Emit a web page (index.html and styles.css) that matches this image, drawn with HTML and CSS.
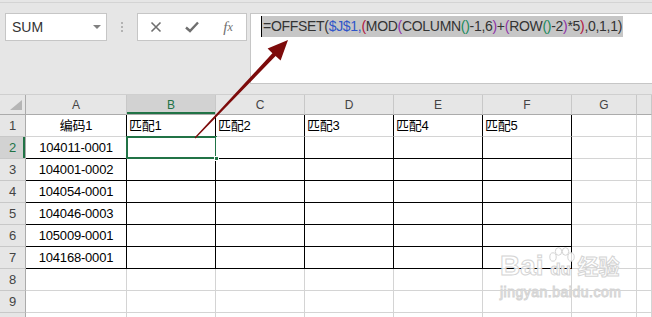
FILE: index.html
```html
<!DOCTYPE html>
<html lang="zh-CN">
  <head>
    <meta charset="UTF-8" />
    <title>Excel - OFFSET</title>
    <link rel="stylesheet" href="styles.css">
  </head>
  <body>
    <div class="app">

      <!-- Formula bar -->
      <div class="topline"></div>
      <div class="fbar">
        <div class="namebox">
          <span>SUM</span>
          <span class="caret"></span>
        </div>
        <div class="grip"><i></i><i></i><i></i></div>
        <div class="btns">
          <span class="btn">
            <svg width="12" height="12" viewBox="0 0 12 12"><path d="M1.5 1.5 L10.5 10.5 M10.5 1.5 L1.5 10.5" stroke="#6f6f6f" stroke-width="1.6" fill="none"/></svg>
          </span>
          <span class="btn">
            <svg width="14" height="12" viewBox="0 0 14 12"><path d="M1 6.5 L5 10 L13 1.5" stroke="#6f6f6f" stroke-width="2.4" fill="none"/></svg>
          </span>
          <span class="btn fx">f<i>x</i></span>
        </div>
        <div class="formula">
          <span class="sel">=OFFSET(<span class="ref">$J$1,</span><span class="p1">(</span>MOD<span class="p2">(</span>COLUMN<span class="p3">()</span>-1,6<span class="p2">)</span>+<span class="p2">(</span>ROW<span class="p3">()</span>-2<span class="p2">)</span>*5<span class="p1">)</span>,0,1,1)</span>
        </div>
      </div>

      <!-- Sheet -->
      <div class="sheet">
        <div class="row hdr">
          <div class="corner"><svg width="12" height="10" viewBox="0 0 12 10"><polygon points="12,0 12,10 0,10" fill="#b5b5b5"/></svg></div>
          <div class="ch">A</div>
          <div class="ch on">B</div>
          <div class="ch">C</div>
          <div class="ch">D</div>
          <div class="ch">E</div>
          <div class="ch">F</div>
          <div class="ch">G</div>
          <div class="ch"></div>
        </div>

        <div class="row top">
          <div class="rh">1</div>
          <div class="c in ctr">编码1</div>
          <div class="c in">匹配1</div>
          <div class="c in">匹配2</div>
          <div class="c in">匹配3</div>
          <div class="c in">匹配4</div>
          <div class="c in">匹配5</div>
          <div class="c"></div>
          <div class="c"></div>
        </div>

        <div class="row boxed">
          <div class="rh on">2</div>
          <div class="c in ctr">104011-0001</div>
          <div class="c in active"><span class="handle"></span></div>
          <div class="c in"></div>
          <div class="c in"></div>
          <div class="c in"></div>
          <div class="c in"></div>
          <div class="c"></div>
          <div class="c"></div>
        </div>

        <div class="row boxed">
          <div class="rh">3</div>
          <div class="c in ctr">104001-0002</div>
          <div class="c in"></div>
          <div class="c in"></div>
          <div class="c in"></div>
          <div class="c in"></div>
          <div class="c in"></div>
          <div class="c"></div>
          <div class="c"></div>
        </div>

        <div class="row boxed">
          <div class="rh">4</div>
          <div class="c in ctr">104054-0001</div>
          <div class="c in"></div>
          <div class="c in"></div>
          <div class="c in"></div>
          <div class="c in"></div>
          <div class="c in"></div>
          <div class="c"></div>
          <div class="c"></div>
        </div>

        <div class="row boxed">
          <div class="rh">5</div>
          <div class="c in ctr">104046-0003</div>
          <div class="c in"></div>
          <div class="c in"></div>
          <div class="c in"></div>
          <div class="c in"></div>
          <div class="c in"></div>
          <div class="c"></div>
          <div class="c"></div>
        </div>

        <div class="row boxed">
          <div class="rh">6</div>
          <div class="c in ctr">105009-0001</div>
          <div class="c in"></div>
          <div class="c in"></div>
          <div class="c in"></div>
          <div class="c in"></div>
          <div class="c in"></div>
          <div class="c"></div>
          <div class="c"></div>
        </div>

        <div class="row boxed">
          <div class="rh">7</div>
          <div class="c in ctr">104168-0001</div>
          <div class="c in"></div>
          <div class="c in"></div>
          <div class="c in"></div>
          <div class="c in"></div>
          <div class="c in"></div>
          <div class="c"></div>
          <div class="c"></div>
        </div>

        <div class="row">
          <div class="rh">8</div>
          <div class="c"></div><div class="c"></div><div class="c"></div><div class="c"></div>
          <div class="c"></div><div class="c"></div><div class="c"></div><div class="c"></div>
        </div>

        <div class="row">
          <div class="rh">9</div>
          <div class="c"></div><div class="c"></div><div class="c"></div><div class="c"></div>
          <div class="c"></div><div class="c"></div><div class="c"></div><div class="c"></div>
        </div>

        <div class="row">
          <div class="rh"></div>
          <div class="c"></div><div class="c"></div><div class="c"></div><div class="c"></div>
          <div class="c"></div><div class="c"></div><div class="c"></div><div class="c"></div>
        </div>
      </div>

      <!-- Annotation arrow -->
      <svg class="arrow" width="652" height="317" viewBox="0 0 652 317">
        <polygon points="194.6,137.6 272.4,53.2 267.6,48.6 288,40 280.6,60.4 275.6,56 195.4,138.4" fill="#7d0b0b"/>
      </svg>

      <!-- Watermark -->
      <div class="watermark">
        <div class="wm-top">
          <span class="wm-bai">Bai</span>
          <span class="wm-du">
            <svg class="paw" width="30" height="18" viewBox="0 0 30 18">
              <ellipse cx="7" cy="10" rx="3.2" ry="4.2" />
              <ellipse cx="12.5" cy="4.5" rx="3.2" ry="3.8" />
              <ellipse cx="19.5" cy="4.5" rx="3.2" ry="3.8" />
              <ellipse cx="25" cy="10" rx="3.2" ry="4.2" />
            </svg>
            <span class="du">du</span>
          </span>
          <span class="wm-jy">经验</span>
        </div>
        <div class="wm-url">jingyan.baidu.com</div>
      </div>

    </div>
  </body>
</html>
```

FILE: styles.css
```css
* {
  box-sizing: border-box;
}

body {
  margin: 0;
  background-color: #e6e6e6;
  font-family: 'Liberation Sans', 'Noto Sans CJK SC', sans-serif;
}

.app {
  position: relative;
  width: 652px;
  height: 317px;
  overflow: hidden;
  background-color: #e6e6e6;
}

/* ---------- formula bar ---------- */

.topline {
  height: 3px;
  border-bottom: 1px solid #d4d4d4;
}

.fbar {
  display: flex;
  align-items: flex-start;
  height: 91px;
  padding: 10px 0 0 5px;
}

.namebox {
  display: flex;
  align-items: center;
  width: 102px;
  height: 28px;
  padding-left: 6px;
  background: white;
  border: 1px solid #c6c6c6;
  color: #333;
  font-size: 14px;
}

.caret {
  margin-left: auto;
  margin-right: 5px;
  width: 0;
  height: 0;
  border-left: 4px solid transparent;
  border-right: 4px solid transparent;
  border-top: 4px solid #808080;
}

.grip {
  display: flex;
  flex-direction: column;
  align-items: center;
  gap: 2px;
  width: 30px;
  margin-top: 9px;
}

.grip i {
  width: 2px;
  height: 2px;
  background: #b3b3b3;
}

.btns {
  display: flex;
  width: 110px;
  height: 28px;
  background: white;
  border: 1px solid #c6c6c6;
}

.btn {
  display: flex;
  align-items: center;
  justify-content: center;
  width: 36px;
}

.fx {
  font-family: 'Liberation Serif', serif;
  font-style: italic;
  font-size: 15px;
  color: #6f6f6f;
}

.fx i {
  font-size: 12px;
}

.formula {
  flex: 1;
  height: 71px;
  margin-left: 3px;
  padding: 2px 0 0 10px;
  background: white;
  border: 1px solid #c6c6c6;
  border-right: none;
}

.sel {
  display: inline-block;
  height: 21px;
  line-height: 21px;
  padding: 0 1px;
  background: #c6c6c6;
  border-left: 1px solid #000;
  color: #333;
  font-size: 14px;
  letter-spacing: -0.3px;
  white-space: nowrap;
}

.ref { color: #2f56c9; }
.p1 { color: #b3123d; }
.p2 { color: #8d2fa8; }
.p3 { color: #168a5a; }

/* ---------- sheet ---------- */

.sheet {
  border-top: 1px solid #cfcfcf;
}

.row {
  display: grid;
  grid-template-columns: 26px 101px repeat(5, 89px) 65px 1fr;
  height: 22px;
}

.row.hdr {
  height: 20px;
}

.corner {
  display: flex;
  align-items: flex-end;
  justify-content: flex-end;
  padding: 0 3px 4px 0;
  border-right: 1px solid #ababab;
  border-bottom: 1px solid #ababab;
}

.ch {
  display: flex;
  align-items: center;
  justify-content: center;
  border-right: 1px solid #c8c8c8;
  border-bottom: 1px solid #ababab;
  color: #444;
  font-size: 12px;
}

.ch.on {
  background: #d2d2d2;
  color: #217346;
  box-shadow: inset 0 -2px 0 #217346;
}

.rh {
  display: flex;
  align-items: center;
  justify-content: center;
  border-right: 1px solid #ababab;
  border-bottom: 1px solid #c8c8c8;
  color: #444;
  font-size: 13px;
}

.rh.on {
  background: #d2d2d2;
  color: #217346;
  box-shadow: inset -2px 0 0 #217346;
}

.c {
  position: relative;
  padding-left: 2px;
  background: white;
  border-right: 1px solid #d4d4d4;
  border-bottom: 1px solid #d4d4d4;
  color: #000;
  font-size: 13px;
  line-height: 21px;
  letter-spacing: -0.2px;
  white-space: nowrap;
}

.c.ctr {
  padding-left: 0;
  text-align: center;
}

.row.top .c.in {
  border-right-color: #000;
}

.row.boxed .c.in {
  border-right-color: #000;
  border-bottom-color: #000;
}

/* active cell B2 */
.c.active::after {
  content: "";
  position: absolute;
  top: -1px;
  left: -1px;
  right: -2px;
  bottom: -1px;
  border: 2px solid #217346;
}

.handle {
  position: absolute;
  right: -4px;
  bottom: -3px;
  z-index: 2;
  width: 5px;
  height: 5px;
  background: #217346;
  border: 1px solid white;
}

/* ---------- overlays ---------- */

.arrow {
  position: absolute;
  left: 0;
  top: 0;
  pointer-events: none;
}

.watermark {
  position: absolute;
  left: 500px;
  top: 247px;
  color: rgba(255, 255, 255, 0.85);
  -webkit-text-stroke: 1px #d4d4d4;
  pointer-events: none;
}

.wm-top {
  display: flex;
  align-items: flex-end;
}

.wm-bai {
  font-size: 28px;
  font-weight: bold;
  line-height: 24px;
}

.wm-du {
  display: flex;
  flex-direction: column;
  align-items: center;
  width: 34px;
}

.paw {
  fill: rgba(255, 255, 255, 0.85);
  stroke: #d4d4d4;
  stroke-width: 1;
}

.du {
  margin-top: -4px;
  font-size: 17px;
  font-weight: bold;
  line-height: 17px;
}

.wm-jy {
  font-size: 21px;
  font-weight: bold;
  line-height: 22px;
}

.wm-url {
  margin-top: 6px;
  font-size: 14px;
  letter-spacing: 0.5px;
}
```
